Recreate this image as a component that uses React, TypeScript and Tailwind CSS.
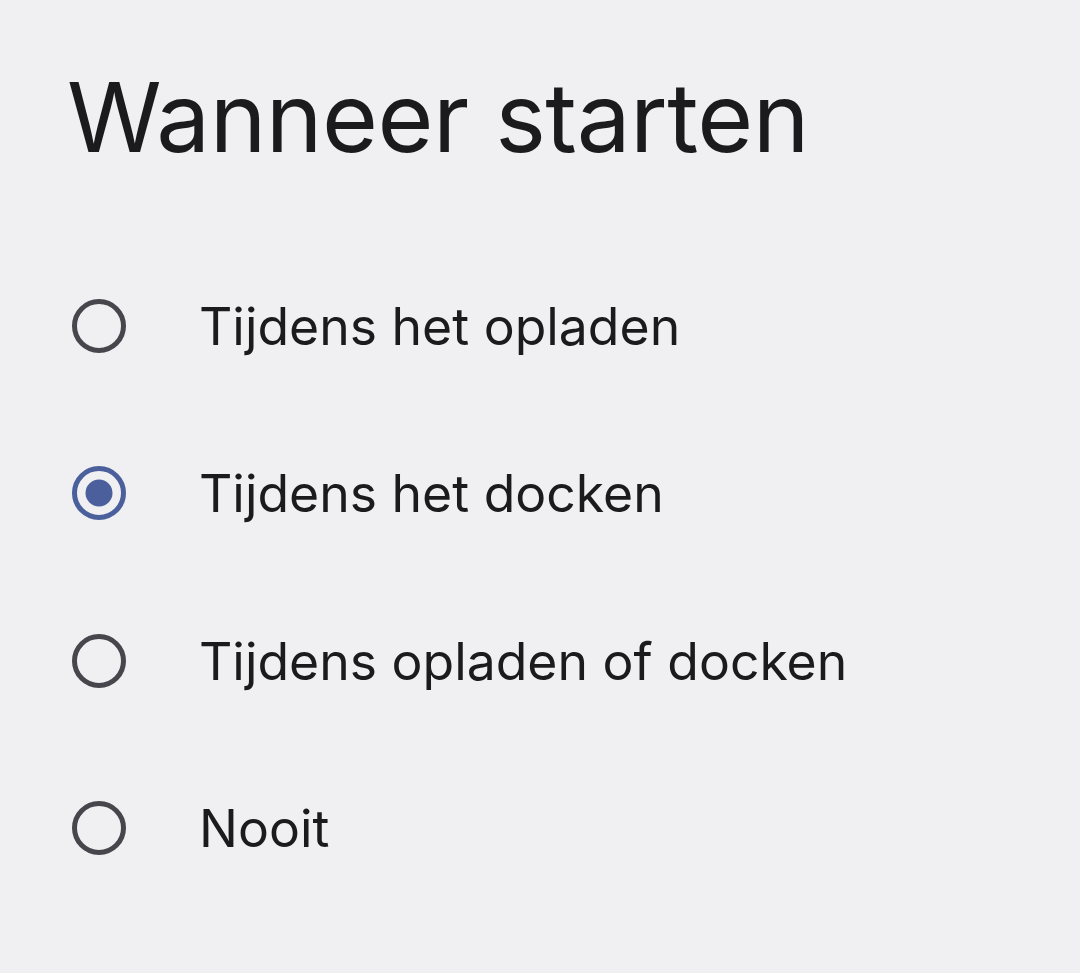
import React from "react";

const options = [
  "Tijdens het opladen",
  "Tijdens het docken",
  "Tijdens opladen of docken",
  "Nooit",
];

function Radio({ checked }: { checked: boolean }) {
  return (
    <svg width="58" height="58" viewBox="0 0 58 58" className="shrink-0">
      <circle
        cx="29"
        cy="29"
        r="24.5"
        fill="none"
        stroke={checked ? "#4a5f9c" : "#46464c"}
        strokeWidth="5"
      />
      {checked && <circle cx="29" cy="29" r="13.5" fill="#4a5f9c" />}
    </svg>
  );
}

export default function App() {
  return (
    <div
      className="w-[1080px] h-[973px] bg-[#f0f0f2] text-[#1b1b1d] overflow-hidden"
      style={{ fontFamily: "Inter, 'Open Sans', sans-serif" }}
    >
      <h1 className="pl-[67px] pt-[57px] text-[96px] leading-[120px] font-normal tracking-[-0.5px]">
        Wanneer starten
      </h1>
      <div className="mt-[65px] flex flex-col">
        {options.map((o, i) => (
          <div key={o} className="flex items-center h-[167.5px] pl-[70px]">
            <Radio checked={i === 1} />
            <span className="ml-[71px] text-[51.7px] leading-[60px]">{o}</span>
          </div>
        ))}
      </div>
    </div>
  );
}
